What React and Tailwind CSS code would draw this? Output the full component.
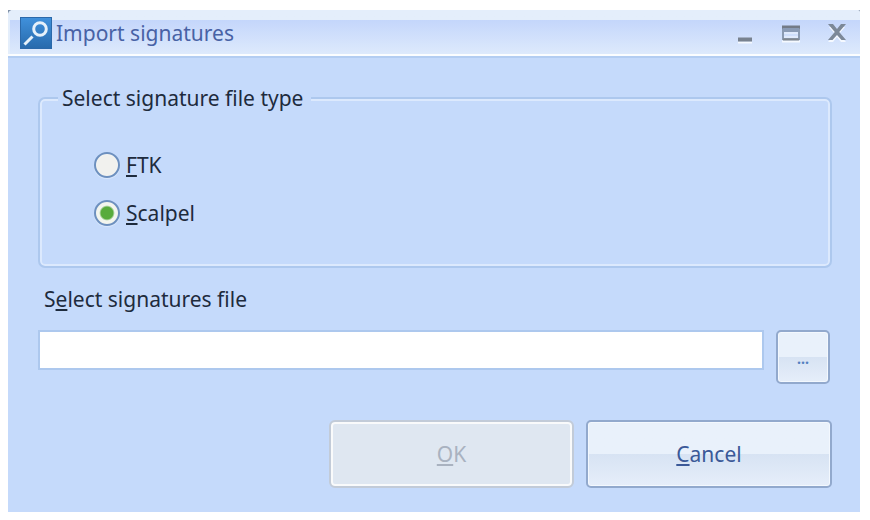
import { useState } from "react";

const RADIO =
  "m-0 size-[26px] shrink-0 appearance-none rounded-full border-2 border-[#6d90bf] bg-[#f1f1ee] bg-radial from-[#f1f1ee] from-60% to-white shadow-[0_1px_1px_#dce9fc] checked:from-[#58ab3c] checked:from-38% checked:via-[#f3f5ee] checked:via-50% checked:to-[#f3f5ee]";
const BUTTON =
  "rounded-[5px] border-2 border-[#92a9cd] bg-linear-to-b from-[#e9f1fb] from-50% via-[#d7e3f3] via-50% to-[#e6eefa] text-[#3b5998] shadow-[inset_0_0_0_1px_#f3f8fe]";
const KEY = "underline decoration-2 underline-offset-2 [text-decoration-skip-ink:none]";

function TitleBar() {
  return (
    <div className="bg-[#8192a8]">
      <header className="flex h-12 items-center rounded-tl-[5px] rounded-tr-[2px] border-b-2 border-[#b3cdf2] bg-linear-to-b from-[#e4eefb] from-[10px] via-[#c4d6fb] via-[10px] to-[#dfebfc] pr-[13px] pl-3 shadow-[inset_0_-2px_0_#fbfdff,inset_2px_0_0_#e4eefb]">
        <svg className="size-8 shrink-0" viewBox="0 0 32 32" aria-hidden="true">
          <defs>
            <linearGradient id="tile" x1="0" y1="0" x2="0" y2="1">
              <stop offset="0" stopColor="#4091dc" />
              <stop offset="1" stopColor="#286aac" />
            </linearGradient>
          </defs>
          <rect x="0.5" y="0.5" width="31" height="31" fill="url(#tile)" stroke="#2b69aa" />
          <circle cx="20" cy="12" r="6.3" fill="none" stroke="#e6f1fa" strokeWidth="3" />
          <path d="M4.5 27.5 12.5 19.5" stroke="#e6f1fa" strokeWidth="3" />
        </svg>
        <h1 className="ml-1 flex-1 leading-6 text-[#4862a5]">Import signatures</h1>
        <div className="flex items-center gap-[26px]">
          <button type="button" aria-label="Minimize" className="h-6 w-[18px]">
            <svg className="h-6 w-[18px]" viewBox="0 0 18 24" aria-hidden="true">
              <path d="M1 21.5H15" stroke="#f5f9ff" strokeWidth="2" />
              <path d="M1 18.500H15" stroke="#78828f" strokeWidth="4" />
            </svg>
          </button>
          <button type="button" aria-label="Maximize" className="h-6 w-5">
            <svg className="h-6 w-5" viewBox="0 0 20 24" aria-hidden="true">
              <path d="M1 20.5H19" stroke="#f5f9ff" strokeWidth="2" />
              <path d="M2 6V18H18V6" fill="none" stroke="#8b9bb2" strokeWidth="2" />
              <path d="M1 6H19" stroke="#737b87" strokeWidth="3" />
              <path d="M2 9H18" stroke="#8a9bb5" strokeWidth="4" />
              <path d="M3 12H17M3 16H17" stroke="#f0f5fd" strokeWidth="1" />
              <path d="M2 18.5H18" stroke="#80868d" strokeWidth="2" />
            </svg>
          </button>
          <button type="button" aria-label="Close" className="h-6 w-5">
            <svg className="h-6 w-5" viewBox="0 0 20 24" aria-hidden="true">
              <path d="M2 6H6L10 10 14 6H18L12 13 19 21H14L10 16 6 21H1L8 13Z" fill="#f5f9ff" />
              <path d="M1 3H6L10 8 14 3H19L12.200 11 19 19H14.500L10 14 5.500 19H1L7.800 11Z" fill="#7c8898" />
            </svg>
          </button>
        </div>
      </header>
    </div>
  );
}

export default function App() {
  const [type, setType] = useState("scalpel");
  const [path, setPath] = useState("");

  return (
    <div className="bg-white pt-[10px] pr-[10px] pb-2 pl-2 font-['Noto_Sans','Open_Sans',sans-serif] text-[21px] leading-6 text-[#1e2b3d]">
      <main className="bg-[#c5dafb]">
        <TitleBar />
        <form className="pt-7 pr-7 pb-6 pl-[30px]" onSubmit={(e) => e.preventDefault()}>
          <fieldset className="rounded-[7px] border-2 border-[#adc8ee] pt-[31px] pr-4 pb-[29px] pl-[54px] shadow-[inset_0_0_0_2px_#dce9fd]">
            <legend className="-ml-9 bg-[#c5dafb] pr-2 pl-1">Select signature file type</legend>
            <label className="flex h-12 items-center gap-[6px]">
              <input
                type="radio"
                name="type"
                className={RADIO}
                checked={type === "ftk"}
                onChange={() => setType("ftk")}
              />
              <span><span className={KEY}>F</span>TK</span>
            </label>
            <label className="flex h-12 items-center gap-[6px]">
              <input
                type="radio"
                name="type"
                className={RADIO}
                checked={type === "scalpel"}
                onChange={() => setType("scalpel")}
              />
              <span><span className={KEY}>S</span>calpel</span>
            </label>
          </fieldset>

          <label htmlFor="file" className="mt-[19px] ml-[6px] block">
            S<span className={KEY}>e</span>lect signatures file
          </label>
          <div className="mt-[19px] mr-[2px] flex items-start gap-3">
            <input
              id="file"
              type="text"
              value={path}
              onChange={(e) => setPath(e.target.value)}
              className="h-10 min-w-0 flex-1 border-2 border-[#adc8ee] bg-white px-2 outline-none"
            />
            <button type="button" aria-label="Browse" className={`${BUTTON} h-[54px] w-[54px]`}>
              <span className="text-[14px] font-bold text-[#5580c0]">...</span>
            </button>
          </div>

          <div className="mt-9 flex justify-end gap-3">
            <button
              type="submit"
              disabled
              className="h-[68px] w-[245px] rounded-[6px] border-2 border-[#c2cbd8] bg-[#dfe7f1] text-[#a9b2c0] shadow-[inset_0_0_0_2px_#f9fafb]"
            >
              <span className={KEY}>O</span>K
            </button>
            <button type="button" className={`${BUTTON} h-[68px] w-[246px]`}>
              <span className={KEY}>C</span>ancel
            </button>
          </div>
        </form>
      </main>
    </div>
  );
}
